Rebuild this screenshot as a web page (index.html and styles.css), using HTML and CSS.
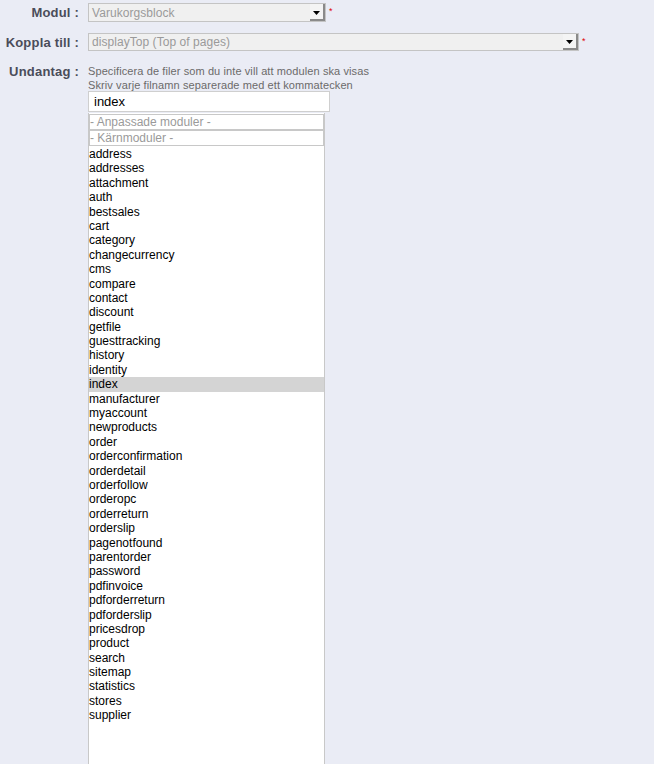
FILE: index.html
```html
<!DOCTYPE html>
<html>
<head>
<meta charset="utf-8">
<link rel="stylesheet" href="styles.css">
</head>
<body>
<div class="form">
  <div class="row r1">
    <div class="label">Modul :</div>
    <div class="field">
      <div class="select s1"><span class="val">Varukorgsblock</span><span class="arrow"><svg width="7" height="4" viewBox="0 0 7 4"><path d="M0 0h7L3.5 4z" fill="#000"/></svg></span></div>
      <span class="req">*</span>
    </div>
  </div>
  <div class="row r2">
    <div class="label">Koppla till :</div>
    <div class="field">
      <div class="select s2"><span class="val">displayTop (Top of pages)</span><span class="arrow"><svg width="7" height="4" viewBox="0 0 7 4"><path d="M0 0h7L3.5 4z" fill="#000"/></svg></span></div>
      <span class="req">*</span>
    </div>
  </div>
  <div class="row r3">
    <div class="label">Undantag :</div>
    <div class="field col">
      <div class="help">Specificera de filer som du inte vill att modulen ska visas<br>Skriv varje filnamn separerade med ett kommatecken</div>
      <div class="input">index</div>
      <div class="list">
        <div class="grp">- Anpassade moduler -</div>
        <div class="grp">- Kärnmoduler -</div>
        <div class="opt">address</div>
        <div class="opt">addresses</div>
        <div class="opt">attachment</div>
        <div class="opt">auth</div>
        <div class="opt">bestsales</div>
        <div class="opt">cart</div>
        <div class="opt">category</div>
        <div class="opt">changecurrency</div>
        <div class="opt">cms</div>
        <div class="opt">compare</div>
        <div class="opt">contact</div>
        <div class="opt">discount</div>
        <div class="opt">getfile</div>
        <div class="opt">guesttracking</div>
        <div class="opt">history</div>
        <div class="opt">identity</div>
        <div class="opt sel">index</div>
        <div class="opt">manufacturer</div>
        <div class="opt">myaccount</div>
        <div class="opt">newproducts</div>
        <div class="opt">order</div>
        <div class="opt">orderconfirmation</div>
        <div class="opt">orderdetail</div>
        <div class="opt">orderfollow</div>
        <div class="opt">orderopc</div>
        <div class="opt">orderreturn</div>
        <div class="opt">orderslip</div>
        <div class="opt">pagenotfound</div>
        <div class="opt">parentorder</div>
        <div class="opt">password</div>
        <div class="opt">pdfinvoice</div>
        <div class="opt">pdforderreturn</div>
        <div class="opt">pdforderslip</div>
        <div class="opt">pricesdrop</div>
        <div class="opt">product</div>
        <div class="opt">search</div>
        <div class="opt">sitemap</div>
        <div class="opt">statistics</div>
        <div class="opt">stores</div>
        <div class="opt">supplier</div>
      </div>
    </div>
  </div>
</div>
</body>
</html>
```
FILE: styles.css
```css
html, body {
  margin: 0;
  padding: 0;
  background: #eaecf5;
  height: 764px;
  overflow: hidden;
}
body {
  font-family: "Liberation Sans", Arial, sans-serif;
  font-size: 12px;
  color: #000;
}
.form {
  padding-top: 3px;
}
.row {
  display: grid;
  grid-template-columns: 79px 1fr;
  column-gap: 9px;
}
.label {
  text-align: right;
  font-weight: bold;
  font-size: 13px;
  letter-spacing: 0.2px;
  color: #4a4c5a;
  line-height: 19px;
}
.field {
  display: flex;
  align-items: flex-start;
}
.field.col {
  flex-direction: column;
}
.r2 { margin-top: 11px; }
.r3 { margin-top: 12px; }
.r3 .label { line-height: 16px; }
.select {
  box-sizing: border-box;
  height: 19px;
  border: 1px solid #c4c4c4;
  background: #f0f0f0;
  display: flex;
  align-items: center;
  justify-content: space-between;
  color: #9a9a9a;
  font-size: 12px;
}
.s1 { width: 238px; }
.s2 { width: 491px; height: 18px; }
.val { padding-left: 3px; letter-spacing: 0.05px; }
.arrow {
  box-sizing: border-box;
  width: 15px;
  height: 17px;
  background: #f4f4f4;
  border-right: 2px solid #8a8a8a;
  border-bottom: 2px solid #8a8a8a;
  display: flex;
  align-items: center;
  justify-content: center;
  padding-top: 2px;
}
.s2 .arrow { height: 16px; }
.req {
  color: #e00000;
  font-size: 9px;
  line-height: 9px;
  margin-left: 3px;
  margin-top: 4px;
}
.help {
  font-size: 11px;
  letter-spacing: 0.1px;
  color: #6a6a6a;
  line-height: 14px;
}
.input {
  box-sizing: border-box;
  margin-top: -1px;
  width: 242px;
  height: 21px;
  border: 1px solid #cfcfcf;
  background: #fff;
  font-size: 13px;
  line-height: 19px;
  padding-left: 5px;
}
.list {
  box-sizing: border-box;
  margin-top: 1px;
  width: 237px;
  height: 660px;
  border: 1px solid #c8c8c8;
  border-top: none;
  background: #fff;
}
.grp {
  box-sizing: border-box;
  height: 16px;
  border: 1px solid #c8c8c8;
  color: #9a9a9a;
  font-size: 12px;
  line-height: 14px;
  margin-top: 1px;
  margin-bottom: -1px;
}
.grp + .grp { margin-top: 1px; }
.grp + .opt { margin-top: 2px; }
.opt {
  height: 14.4px;
  line-height: 14.4px;
  font-size: 12px;
  color: #000;
}
.opt.sel {
  background: #d4d4d4;
}
```
